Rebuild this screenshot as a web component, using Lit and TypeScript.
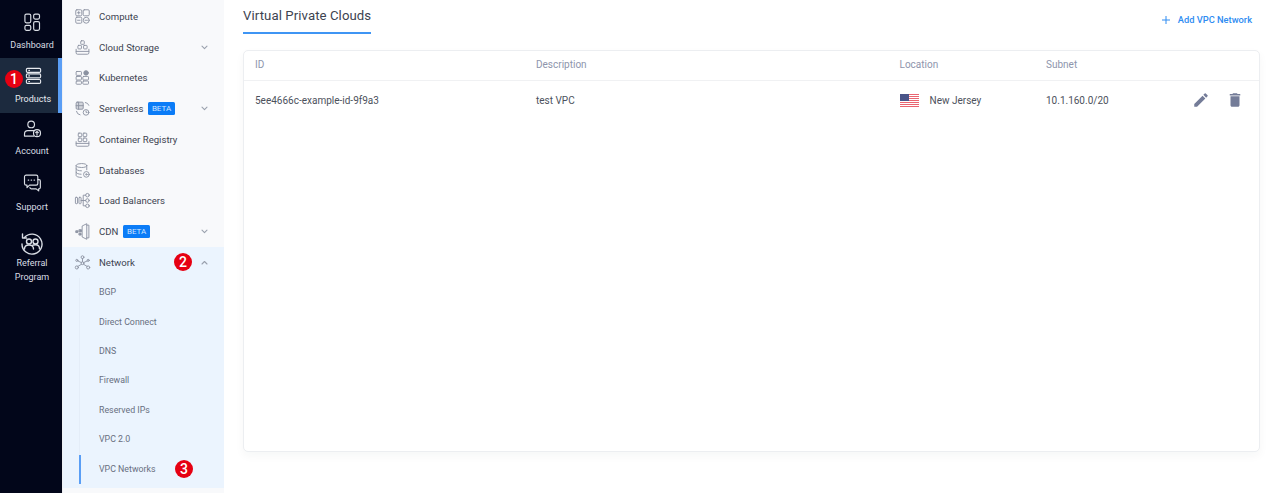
import { LitElement, html, css, svg } from "lit";
import { customElement } from "lit/decorators.js";

const g = (body: unknown, size = 20) => html`<svg width=${size} height=${size} viewBox="0 0 24 24" fill="none" stroke="currentColor" stroke-width="1.4" stroke-linejoin="round" stroke-linecap="round">${body}</svg>`;

const railIcons: Record<string, unknown> = {
  dash: g(svg`<rect x="3.500" y="2.500" width="7" height="10.500" rx="1.800"/><rect x="14" y="2.500" width="7" height="6" rx="1.800"/><rect x="3.500" y="16" width="7" height="6" rx="1.800"/><rect x="14" y="11.500" width="7" height="10.500" rx="1.800"/>`, 20),
  prod: g(svg`<rect x="3" y="3" width="18" height="5" rx="1.500"/><rect x="3" y="10" width="18" height="5" rx="1.500"/><rect x="3" y="17" width="18" height="5" rx="1.500"/><path d="M6 5.500h1M6 12.500h1M6 19.500h1"/>`, 19),
  acct: g(svg`<circle cx="11" cy="6.500" r="4"/><path d="M3 20.500v-2.500a4 4 0 0 1 4-4h7M3 20.500h11"/><circle cx="18" cy="17" r="4.200"/><path d="M18 19.500v-4.500M16.400 16.400l1.600-1.600 1.600 1.600"/>`, 20),
  sup: g(svg`<path d="M3 4.500a2 2 0 0 1 2-2h12a2 2 0 0 1 2 2v8a2 2 0 0 1-2 2H9l-3 3v-3H5a2 2 0 0 1-2-2z"/><path d="M19 8h1.500a1.500 1.500 0 0 1 1.500 1.500v8a1.500 1.500 0 0 1-1.500 1.500H20v2.500l-3-2.500h-6a1.500 1.500 0 0 1-1.500-1.500"/><path d="M7.500 8.500h.5M11 8.500h.5M14.500 8.500h.5" stroke-width="1.600"/>`, 20),
  ref: g(svg`<path d="M4.500 6.500A10 10 0 1 1 2 13"/><path d="M2.500 3v4h4"/><circle cx="9" cy="10.500" r="2.500"/><circle cx="15.500" cy="10.500" r="2.500"/><path d="M4.500 18c0-2.500 2-4 4.500-4s4.500 1.500 4.500 4M12 14.500c1-.6 2-.8 3.500-.8 2.500 0 4 1.500 4 4"/>`, 24),
};

const navIcons: Record<string, unknown> = {
  compute: svg`<rect x="2.500" y="2.500" width="8.500" height="8.500" rx="1.500"/><rect x="13" y="2.500" width="8.500" height="8.500" rx="1.500"/><rect x="2.500" y="13" width="8.500" height="8.500" rx="1.500"/><circle cx="17.300" cy="17.300" r="4.200"/><path d="M5 6.700h3.500M6.700 5v3.500M5 17.300h3.500M15.500 17.300h3.500"/>`,
  storage: svg`<rect x="9.500" y="2.500" width="5" height="5" rx="1"/><rect x="5.500" y="9" width="5" height="5" rx="1"/><rect x="13.500" y="9" width="5" height="5" rx="1"/><path d="M3 14.500v5a2 2 0 0 0 2 2h14a2 2 0 0 0 2-2v-5M3 17.500h18"/>`,
  k8s: svg`<rect x="3" y="3.500" width="7.500" height="5.500" rx="1"/><rect x="3" y="10.500" width="7.500" height="5" rx="1"/><rect x="3" y="17" width="7.500" height="4.500" rx="1"/><rect x="12.500" y="10.500" width="8" height="5" rx="1"/><rect x="12.500" y="17" width="8" height="4.500" rx="1"/><circle cx="17" cy="5.500" r="3.200" fill="currentColor"/>`,
  serverless: svg`<rect x="3" y="3" width="10" height="10" rx="1.500" fill="currentColor" fill-opacity=".35"/><path d="M6.500 3v10M3 8h10"/><circle cx="17" cy="17.500" r="4"/><path d="M17 15.500v2h1.500M16 3.500a6 6 0 0 1 5 4M3.500 16a6 6 0 0 0 5 5"/>`,
  registry: svg`<rect x="6" y="3" width="5" height="5" rx="1"/><rect x="13" y="3" width="5" height="5" rx="1"/><rect x="6" y="10" width="5" height="5" rx="1"/><rect x="13" y="10" width="5" height="5" rx="1"/><path d="M3 15v5a1.500 1.500 0 0 0 1.500 1.500h15A1.500 1.500 0 0 0 21 20v-5M3 17.500h18"/>`,
  db: svg`<ellipse cx="10.500" cy="5" rx="7.500" ry="2.800"/><path d="M3 5v14c0 1.500 3.300 2.800 7.500 2.800M18 5v6M3 9.700c0 1.500 3.300 2.800 7.500 2.800M3 14.500c0 1.500 3.300 2.800 7 2.800"/><circle cx="17.500" cy="17.500" r="4"/><circle cx="17.500" cy="17.500" r="1"/>`,
  lb: svg`<rect x="2" y="7.500" width="3" height="9" rx="1"/><rect x="7" y="7.500" width="3" height="9" rx="1"/><circle cx="19" cy="4.500" r="2.500"/><circle cx="19" cy="12" r="2.500"/><circle cx="19" cy="19.500" r="2.500"/><path d="M10 12h6.500M13 12V4.500h3.500M13 12v7.500h3.500"/>`,
  cdn: svg`<path d="M12 4l6-3v22l-6-3zM18 3h3v18h-3"/><rect x="7.500" y="9.500" width="3" height="3" fill="currentColor"/><rect x="3" y="11" width="2.500" height="2.500" fill="currentColor"/><rect x="7.500" y="14.500" width="2.500" height="2.500" fill="currentColor"/>`,
  network: svg`<circle cx="12" cy="4.500" r="2"/><circle cx="4" cy="19" r="2.200"/><circle cx="20" cy="19" r="2.200"/><circle cx="12" cy="13" r="2"/><circle cx="4" cy="9" r="1.500"/><circle cx="20" cy="9" r="1.500"/><path d="M12 6.500V11M5.500 17.500l5-3M18.500 17.500l-5-3M5.300 9.800l5 2.200M18.700 9.800l-5 2.200"/>`,
};

const navIcon = (name: string) => html`<svg class="ic" viewBox="0 0 24 24" fill="none" stroke="currentColor" stroke-width="1.300" stroke-linejoin="round" stroke-linecap="round">${navIcons[name]}</svg>`;

const chevron = (up = false) => html`<svg class="chev" width="7" height="5" viewBox="0 0 7 5" fill="none" stroke="currentColor" stroke-width="1.100" stroke-linecap="round" stroke-linejoin="round"><path d=${up ? "M1 4l2.500-2.500L6 4" : "M1 1.200l2.500 2.500L6 1.200"}/></svg>`;

const flag = html`<svg width="19" height="13" viewBox="0 0 19 13">
  <rect width="19" height="13" fill="#fff"/>
  <path d="M0 .5h19M0 2.500h19M0 4.500h19M0 6.500h19M0 8.500h19M0 10.500h19M0 12.500h19" stroke="#ea6571" stroke-width="1"/>
  <rect width="9" height="7" fill="#4a5488"/>
</svg>`;

@customElement("app-root")
export class AppRoot extends LitElement {
  static styles = css`
    :host { display: block; width: 1280px; height: 493px; overflow: hidden; background: #fff; font-family: Roboto, "Liberation Sans", sans-serif; -webkit-font-smoothing: antialiased; }
    .page { display: flex; height: 493px; }
    .rail { width: 62px; flex: none; background: #02061a; color: #d9dde4; font-size: 9px; text-align: center; display: flex; flex-direction: column; }
    .rail-item { position: relative; display: flex; flex-direction: column; align-items: center; line-height: 14px; box-sizing: border-box; padding-left: 2px; }
    .rail-item svg { display: block; }
    .r-dash { height: 58px; padding-top: 12px; gap: 6px; }
    .r-prod { height: 55px; padding-top: 8px; padding-left: 4px; gap: 7px; background: #1c2a3e; color: #e8ebf0; }
    .r-prod::after { content: ""; position: absolute; right: 0; top: 0; bottom: 0; width: 4px; background: #5a9ef5; }
    .r-acct { height: 56px; padding-top: 5.500px; gap: 5.500px; }
    .r-sup { height: 56px; padding-top: 4px; gap: 7px; }
    .r-ref { padding-top: 6px; gap: 1px; }
    .marker { position: absolute; width: 18px; height: 18px; border-radius: 50%; background: #e60012; color: #fff; font: 500 14px/18px Roboto, "Liberation Sans", sans-serif; text-align: center; }
    .r-prod .marker { left: 5px; top: 12px; }

    .nav { width: 162px; flex: none; box-sizing: border-box; border-left: 1px solid #eef0f3; background: #f8f9fb; color: #3d4350; font-size: 9.600px; font-weight: 400; padding-top: 1px; }
    .row { position: relative; display: flex; align-items: center; height: 30.750px; padding: 0 16.500px 0 11px; box-sizing: border-box; }
    .ic { width: 17px; height: 17px; flex: none; color: #8b92a1; margin-right: 8px; }
    .badge { margin-left: 5px; padding: 0 3.500px; height: 13px; line-height: 13px; background: #0b7cf7; color: #cfe4ff; font-size: 8px; font-weight: 400; border-radius: 1.500px; }
    .chev { margin-left: auto; color: #9aa1ae; }
    .group { background: #ebf4fe; height: 241px; }
    .group .marker { left: 111px; top: 6px; }
    .subs { margin-left: 16px; padding-top: .5px; border-left: 1px solid #e4edf8; }
    .sub { position: relative; height: 29.400px; line-height: 29.400px; padding-left: 19px; font-size: 8.800px; font-weight: 400; color: #686f7e; }
    .sub.on { border-left: 2px solid #5a9ef5; margin-left: -1px; padding-left: 18px; }
    .sub .marker { left: 94px; top: 5px; }

    .main { flex: 1; min-width: 0; padding: 0 20px 0 19px; display: flex; flex-direction: column; }
    .head { height: 50px; display: flex; justify-content: space-between; flex: none; }
    .title { height: 34px; box-sizing: border-box; padding-top: 7px; font-size: 13.200px; line-height: 17px; color: #3d4350; letter-spacing: .08px; border-bottom: 2px solid #3f95f4; }
    .add { display: flex; align-items: center; gap: 7px; height: 39px; font-size: 9.300px; font-weight: 500; color: #2e8cf2; padding-right: 8px; }
    .card { height: 402px; box-sizing: border-box; border: 1px solid #eceef1; border-radius: 5px; box-shadow: 0 4px 10px rgba(30,40,60,.04); background: #fff; }
    .thead, .trow { display: grid; grid-template-columns: 281px 363.500px 146.500px 1fr 67px; align-items: center; padding-left: 11px; }
    .thead { height: 30px; box-sizing: border-box; padding-bottom: 2px; border-bottom: 1px solid #f0f1f3; color: #8e95ac; font-size: 10px; }
    .trow { height: 38px; color: #4c515c; font-size: 10px; }
    .loc { display: flex; align-items: center; gap: 11px; }
    .acts { display: flex; align-items: center; gap: 16px; color: #747c98; }
  `;

  private row(name: string, icon: string, opts: { beta?: boolean; chev?: boolean } = {}) {
    return html`<div class="row">
      ${navIcon(icon)}
      <span>${name}</span>
      ${opts.beta ? html`<span class="badge">BETA</span>` : ""}
      ${opts.chev ? chevron() : ""}
    </div>`;
  }

  render() {
    const subs = ["BGP", "Direct Connect", "DNS", "Firewall", "Reserved IPs", "VPC 2.0"];
    return html`<div class="page">
      <aside class="rail">
        <div class="rail-item r-dash">${railIcons.dash}<span>Dashboard</span></div>
        <div class="rail-item r-prod">${railIcons.prod}<span>Products</span><span class="marker">1</span></div>
        <div class="rail-item r-acct">${railIcons.acct}<span>Account</span></div>
        <div class="rail-item r-sup">${railIcons.sup}<span>Support</span></div>
        <div class="rail-item r-ref">${railIcons.ref}<span>Referral<br />Program</span></div>
      </aside>
      <nav class="nav">
        ${this.row("Compute", "compute")}
        ${this.row("Cloud Storage", "storage", { chev: true })}
        ${this.row("Kubernetes", "k8s")}
        ${this.row("Serverless", "serverless", { beta: true, chev: true })}
        ${this.row("Container Registry", "registry")}
        ${this.row("Databases", "db")}
        ${this.row("Load Balancers", "lb")}
        ${this.row("CDN", "cdn", { beta: true, chev: true })}
        <div class="group">
          <div class="row">
            ${navIcon("network")}
            <span>Network</span><span class="marker">2</span>${chevron(true)}
          </div>
          <div class="subs">
            ${subs.map((s) => html`<div class="sub">${s}</div>`)}
            <div class="sub on">VPC Networks<span class="marker">3</span></div>
          </div>
        </div>
      </nav>
      <main class="main">
        <div class="head">
          <div class="title">Virtual Private Clouds</div>
          <div class="add">
            <svg width="10" height="10" viewBox="0 0 10 10" stroke="currentColor" stroke-width="1"><path d="M5 1v8M1 5h8"/></svg>
            Add VPC Network
          </div>
        </div>
        <div class="card">
          <div class="thead"><span>ID</span><span>Description</span><span>Location</span><span>Subnet</span><span></span></div>
          <div class="trow">
            <span>5ee4666c-example-id-9f9a3</span>
            <span>test VPC</span>
            <span class="loc">${flag}New Jersey</span>
            <span>10.1.160.0/20</span>
            <span class="acts">
              <svg width="18" height="18" viewBox="0 0 24 24" fill="currentColor"><path d="M3 17.250V21h3.750L17.810 9.940l-3.750-3.750L3 17.250zM20.710 7.040a1 1 0 0 0 0-1.410l-2.340-2.340a1 1 0 0 0-1.410 0l-1.830 1.830 3.750 3.750 1.830-1.830z"/></svg>
              <svg width="18" height="18" viewBox="0 0 24 24" fill="currentColor"><path d="M6 19c0 1.100.9 2 2 2h8c1.100 0 2-.9 2-2V7H6v12zM19 4h-3.500l-1-1h-5l-1 1H5v2h14V4z"/></svg>
            </span>
          </div>
        </div>
      </main>
    </div>`;
  }
}
